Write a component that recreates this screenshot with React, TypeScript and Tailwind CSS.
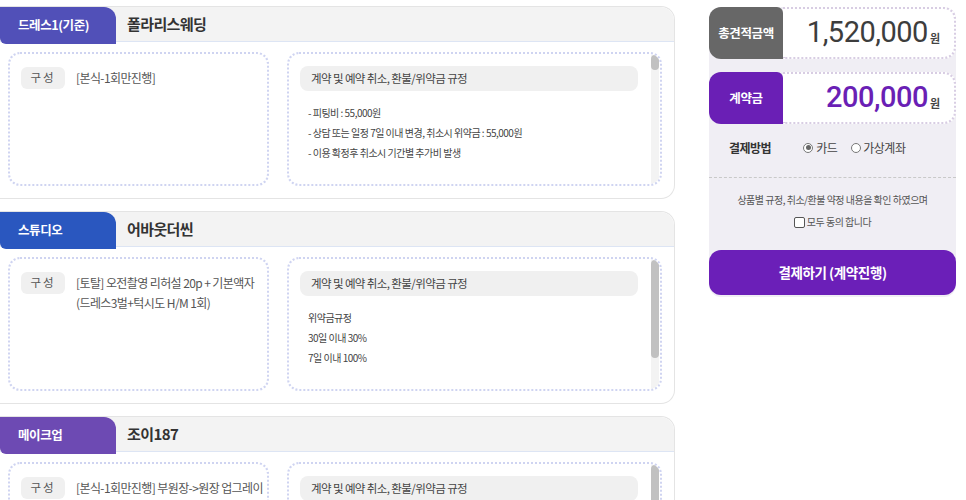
import React from "react";

type CardProps = {
  tab: string;
  tabColor: string;
  title: string;
  left: React.ReactNode;
  items: string[];
  thumbH: number;
};

function Card({ tab, tabColor, title, left, items, thumbH }: CardProps) {
  return (
    <div className="rounded-r-[14px] border border-l-0 border-[#e4e4e4] bg-white">
      <div className="flex h-[35px] rounded-tr-[14px] border-b border-[#dde5f4] bg-[#f3f3f3]">
        <div
          className={`relative z-10 flex h-[37px] w-[116px] items-center rounded-tr-[12px] rounded-bl-[6px] pl-[18px] text-[12.5px] font-bold tracking-[-0.4px] text-white ${tabColor}`}
        >
          {tab}
        </div>
        <div className="ml-[11px] flex items-center text-[15px] font-semibold tracking-[-0.6px] text-[#333]">{title}</div>
      </div>
      <div className="flex gap-[18px] px-[8px] pb-[12px] pt-[10px]">
        <div className="flex h-[134px] w-[261px] items-start gap-[11px] overflow-hidden rounded-[12px] border-2 border-dotted border-[#cfd4f1] pl-[11px] pt-[13px]">
          <div className="flex h-[22px] w-[44px] shrink-0 items-center justify-center rounded-[6px] bg-[#f0f0f0] text-[11.5px] tracking-[2px] text-[#555]">
            구성
          </div>
          <div className="whitespace-nowrap pt-[1px] text-[12px] leading-[20px] tracking-[-0.6px] text-[#555]">{left}</div>
        </div>
        <div className="flex h-[134px] w-[375px] overflow-hidden rounded-[12px] border-2 border-dotted border-[#cfd4f1]">
          <div className="flex-1 pl-[11px] pr-[13px] pt-[12px]">
            <div className="flex h-[25px] items-center rounded-[8px] bg-[#f0f0f0] pl-[11px] text-[11.5px] tracking-[-0.6px] text-[#444]">
              계약 및 예약 취소, 환불/위약금 규정
            </div>
            <div className="mt-[12px] pl-[8px] text-[10px] leading-[20px] tracking-[-0.5px] text-[#444]">
              {items.map((t, i) => (
                <div key={i}>{t}</div>
              ))}
            </div>
          </div>
          <div className="mr-[1px] mt-[1px] w-[8px] bg-[#f3f3f3]">
            <div className="rounded-[4px] bg-[#c1c1c1]" style={{ height: thumbH }} />
          </div>
        </div>
      </div>
    </div>
  );
}

export default function App() {
  return (
    <div
      className="flex h-[500px] w-[966px] overflow-hidden bg-white"
      style={{ fontFamily: "'Noto Sans CJK KR', 'Noto Sans', sans-serif" }}
    >
      <div className="flex w-[675px] shrink-0 flex-col gap-[12px] pt-[6px]">
        <Card
          tab="드레스1(기준)"
          tabColor="bg-[#5150b8]"
          title="폴라리스웨딩"
          left="[본식-1회만진행]"
          items={[
            "- 피팅비 : 55,000원",
            "- 상담 또는 일정 7일 이내 변경, 취소시 위약금 : 55,000원",
            "- 이용 확정후 취소시 기간별 추가비 발생",
          ]}
          thumbH={15}
        />
        <Card
          tab="스튜디오"
          tabColor="bg-[#2a57bf]"
          title="어바웃더씬"
          left={
            <>
              [토탈] 오전촬영 리허설 20p + 기본액자
              <br />
              (드레스3벌+턱시도 H/M 1회)
            </>
          }
          items={["위약금규정", "30일 이내 30%", "7일 이내 100%"]}
          thumbH={98}
        />
        <Card
          tab="메이크업"
          tabColor="bg-[#6d4ab3]"
          title="조이187"
          left={
            <>
              [본식-1회만진행] 부원장-&gt;원장 업그레이
              <br />드
            </>
          }
          items={["- 본식 당일 헤어변형 추가 : 55,000원"]}
          thumbH={60}
        />
      </div>

      <div className="ml-[34px] mt-[7px] flex h-[290px] w-[247px] shrink-0 flex-col rounded-[12px] bg-[#f0eef4]">
        <div className="flex h-[52px]">
          <div className="flex w-[74px] items-center justify-center rounded-l-[12px] rounded-tr-[6px] bg-[#676767] text-[12.5px] font-bold tracking-[-0.4px] text-white">
            총견적금액
          </div>
          <div className="flex flex-1 items-center justify-end rounded-r-[12px] border-2 border-l-0 border-dotted border-[#d8cde3] bg-white pr-[14px]">
            <span className="text-[29px] font-normal tracking-[-0.5px] text-[#3d3d3d]" style={{ fontFamily: "Roboto, sans-serif" }}>
              1,520,000
            </span>
            <span className="ml-[2px] mt-[10px] text-[11px] font-bold text-[#444]">원</span>
          </div>
        </div>
        <div className="mt-[13px] flex h-[52px]">
          <div className="flex w-[74px] items-center justify-center rounded-l-[12px] rounded-tr-[6px] bg-[#6a1fb5] text-[12.5px] font-bold tracking-[-0.4px] text-white">
            계약금
          </div>
          <div className="flex flex-1 items-center justify-end rounded-r-[12px] border-2 border-l-0 border-dotted border-[#d8cde3] bg-white pr-[14px]">
            <span className="text-[29px] font-medium tracking-[-0.5px] text-[#6a1fb5]" style={{ fontFamily: "Roboto, sans-serif" }}>
              200,000
            </span>
            <span className="ml-[2px] mt-[10px] text-[11px] font-bold text-[#444]">원</span>
          </div>
        </div>
        <div className="flex h-[54px] items-center border-b border-dashed border-[#c9c9c9] pb-[6px] pl-[20px] text-[12px] tracking-[-0.5px]">
          <span className="font-semibold text-[#333]">결제방법</span>
          <span className="ml-[32px] flex items-center gap-[3px] text-[#444]">
            <span className="flex h-[10px] w-[10px] items-center justify-center rounded-full border border-[#777] bg-white">
              <span className="h-[5px] w-[5px] rounded-full bg-[#666]" />
            </span>
            카드
          </span>
          <span className="ml-[14px] flex items-center gap-[2px] text-[#444]">
            <span className="h-[10px] w-[10px] rounded-full border border-[#777] bg-white" />
            가상계좌
          </span>
        </div>
        <div className="flex flex-col items-center pt-[14px] text-[10px] leading-[16px] tracking-[-0.5px] text-[#555]">
          <div>상품별 규정, 취소/환불 약정 내용을 확인 하였으며</div>
          <div className="mt-[6px] flex items-center gap-[2px]">
            <span className="h-[11px] w-[11px] rounded-[2px] border border-[#555] bg-white" />
            모두 동의 합니다
          </div>
        </div>
        <div className="mt-[20px] flex h-[45px] items-center justify-center rounded-[12px] bg-[#6b1fb8] text-[13.5px] font-semibold tracking-[-0.4px] text-white">
          결제하기 (계약진행)
        </div>
      </div>
    </div>
  );
}
